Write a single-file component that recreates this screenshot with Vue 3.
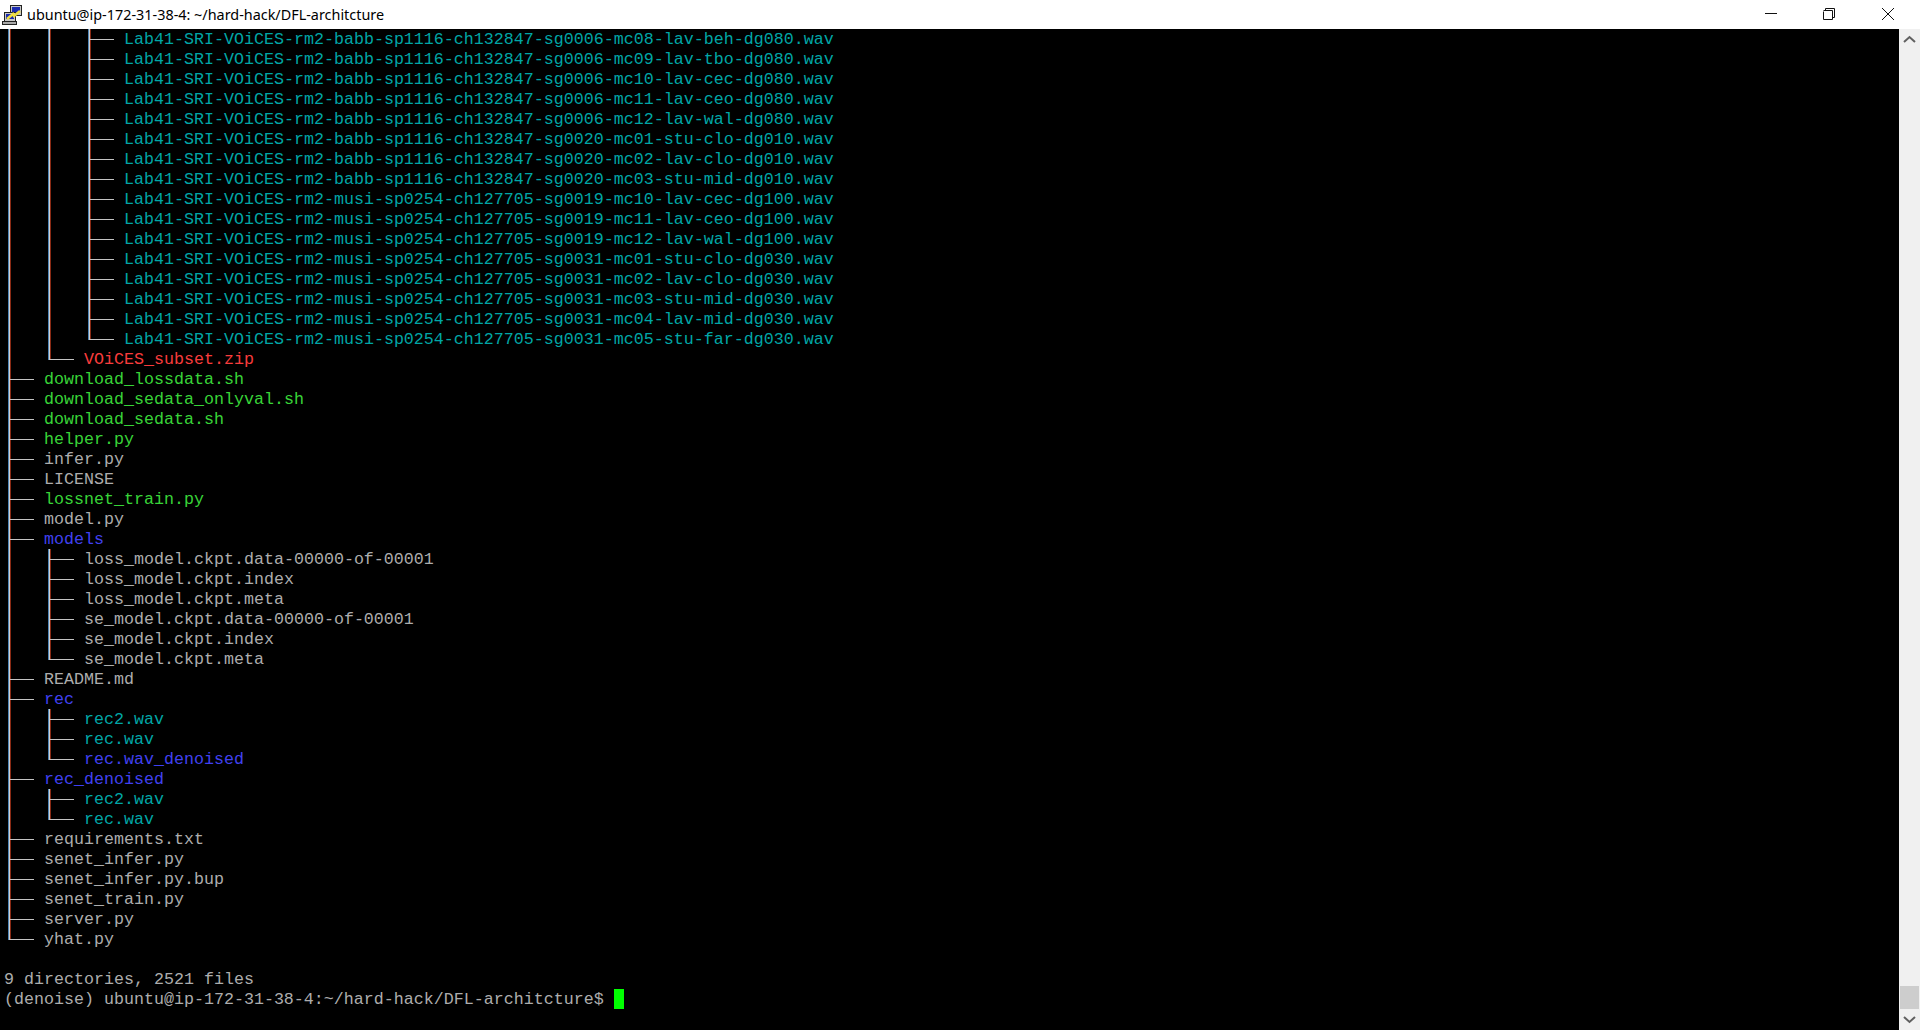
<script setup>
const wav = (s) => 'Lab41-SRI-VOiCES-rm2-' + s + '.wav'
const rows = [
  ...[
    'babb-sp1116-ch132847-sg0006-mc08-lav-beh-dg080',
    'babb-sp1116-ch132847-sg0006-mc09-lav-tbo-dg080',
    'babb-sp1116-ch132847-sg0006-mc10-lav-cec-dg080',
    'babb-sp1116-ch132847-sg0006-mc11-lav-ceo-dg080',
    'babb-sp1116-ch132847-sg0006-mc12-lav-wal-dg080',
    'babb-sp1116-ch132847-sg0020-mc01-stu-clo-dg010',
    'babb-sp1116-ch132847-sg0020-mc02-lav-clo-dg010',
    'babb-sp1116-ch132847-sg0020-mc03-stu-mid-dg010',
    'musi-sp0254-ch127705-sg0019-mc10-lav-cec-dg100',
    'musi-sp0254-ch127705-sg0019-mc11-lav-ceo-dg100',
    'musi-sp0254-ch127705-sg0019-mc12-lav-wal-dg100',
    'musi-sp0254-ch127705-sg0031-mc01-stu-clo-dg030',
    'musi-sp0254-ch127705-sg0031-mc02-lav-clo-dg030',
    'musi-sp0254-ch127705-sg0031-mc03-stu-mid-dg030',
    'musi-sp0254-ch127705-sg0031-mc04-lav-mid-dg030',
  ].map((s) => ({ tree: ['p', 'p', 't'], name: wav(s), c: 'cyan' })),
  { tree: ['p', 'p', 'e'], name: wav('musi-sp0254-ch127705-sg0031-mc05-stu-far-dg030'), c: 'cyan' },
  { tree: ['p', 'e'], name: 'VOiCES_subset.zip', c: 'red' },
  { tree: ['t'], name: 'download_lossdata.sh', c: 'green' },
  { tree: ['t'], name: 'download_sedata_onlyval.sh', c: 'green' },
  { tree: ['t'], name: 'download_sedata.sh', c: 'green' },
  { tree: ['t'], name: 'helper.py', c: 'green' },
  { tree: ['t'], name: 'infer.py', c: '' },
  { tree: ['t'], name: 'LICENSE', c: '' },
  { tree: ['t'], name: 'lossnet_train.py', c: 'green' },
  { tree: ['t'], name: 'model.py', c: '' },
  { tree: ['t'], name: 'models', c: 'blue' },
  { tree: ['p', 't'], name: 'loss_model.ckpt.data-00000-of-00001', c: '' },
  { tree: ['p', 't'], name: 'loss_model.ckpt.index', c: '' },
  { tree: ['p', 't'], name: 'loss_model.ckpt.meta', c: '' },
  { tree: ['p', 't'], name: 'se_model.ckpt.data-00000-of-00001', c: '' },
  { tree: ['p', 't'], name: 'se_model.ckpt.index', c: '' },
  { tree: ['p', 'e'], name: 'se_model.ckpt.meta', c: '' },
  { tree: ['t'], name: 'README.md', c: '' },
  { tree: ['t'], name: 'rec', c: 'blue' },
  { tree: ['p', 't'], name: 'rec2.wav', c: 'cyan' },
  { tree: ['p', 't'], name: 'rec.wav', c: 'cyan' },
  { tree: ['p', 'e'], name: 'rec.wav_denoised', c: 'blue' },
  { tree: ['t'], name: 'rec_denoised', c: 'blue' },
  { tree: ['p', 't'], name: 'rec2.wav', c: 'cyan' },
  { tree: ['p', 'e'], name: 'rec.wav', c: 'cyan' },
  { tree: ['t'], name: 'requirements.txt', c: '' },
  { tree: ['t'], name: 'senet_infer.py', c: '' },
  { tree: ['t'], name: 'senet_infer.py.bup', c: '' },
  { tree: ['t'], name: 'senet_train.py', c: '' },
  { tree: ['t'], name: 'server.py', c: '' },
  { tree: ['e'], name: 'yhat.py', c: '' },
]
</script>

<template>
  <div class="window">
    <header class="titlebar">
      <svg class="appicon" width="22" height="22" viewBox="0 0 22 22">
        <rect x="9.500" y="1.500" width="11" height="10" fill="#c8c8c8" stroke="#222" />
        <rect x="11" y="3" width="8" height="6" fill="#1c2cb0" />
        <rect x="3.500" y="8.500" width="11" height="9" fill="#c8c8c8" stroke="#222" />
        <rect x="5" y="10" width="8" height="5" fill="#1c2cb0" />
        <rect x="1.500" y="17.500" width="14" height="3" fill="#a8a8a8" stroke="#222" />
        <path d="M6 15 L12 10 L13 12 L19 7" fill="none" stroke="#f0e040" stroke-width="2.500" />
      </svg>
      <span class="title">ubuntu@ip-172-31-38-4: ~/hard-hack/DFL-architcture</span>
      <div class="controls">
        <svg width="58" height="29" viewBox="0 0 58 29"><path d="M22 13.500H34" stroke="#111" fill="none" /></svg>
        <svg width="58" height="29" viewBox="0 0 58 29"><path d="M22.500 11.500V19.500H31.500V10.500H22.500M24.500 10.500V8.500H33.500V17.500H31.500" stroke="#111" fill="none" /></svg>
        <svg width="58" height="29" viewBox="0 0 58 29"><path d="M23 8L35 20M35 8L23 20" stroke="#111" fill="none" /></svg>
      </div>
    </header>
    <div class="body">
      <main class="term">
        <div v-for="(r, i) in rows" :key="i" class="row">
          <i v-for="(t, j) in r.tree" :key="j" class="cell" :class="t" />
          <span class="text" :class="r.c">{{ r.name }}</span>
        </div>
        <div class="row"></div>
        <div class="row"><span class="text">9 directories, 2521 files</span></div>
        <div class="row"><span class="text">(denoise) ubuntu@ip-172-31-38-4:~/hard-hack/DFL-architcture$ </span><b class="cursor"></b></div>
      </main>
      <aside class="scrollbar">
        <svg class="arrow" width="17" height="17" viewBox="0 0 17 17"><path d="M3 11L8.500 6L14 11" fill="none" stroke="#606060" stroke-width="2" /></svg>
        <div class="track"><div class="thumb"></div></div>
        <svg class="arrow" width="17" height="17" viewBox="0 0 17 17"><path d="M3 6L8.500 11L14 6" fill="none" stroke="#606060" stroke-width="2" /></svg>
      </aside>
    </div>
  </div>
</template>

<style scoped>
.window { width: 1920px; height: 1030px; display: flex; flex-direction: column; background: #000; overflow: hidden; }
.titlebar { height: 29px; flex: none; background: #fff; display: flex; align-items: center; padding: 0 3px 0 1px; box-sizing: border-box; }
.appicon { flex: none; }
.title { margin-left: 4px; font: 14.4px "Noto Sans", "Open Sans", sans-serif; color: #000; white-space: pre; }
.controls { margin-left: auto; display: flex; }
.controls svg { display: block; }
.body { flex: 1; display: flex; min-height: 0; }
.term { flex: 1; padding-left: 4px; font: 16.67px/20px "Liberation Mono", monospace; color: #adadad; white-space: pre; overflow: hidden; }
.row { height: 20px; display: flex; align-items: flex-start; }
.text { line-height: 22px; }
.cell { display: block; width: 40px; height: 20px; flex: none; position: relative; }
.cell::before { content: ""; position: absolute; left: 5px; top: 0; bottom: 0; width: 1px; background: #d0d0d0; box-shadow: -1px 0 0 #4f86b8, 1px 0 0 #8a2a14; }
.cell.t::after, .cell.e::after { content: ""; position: absolute; left: 6px; top: 10px; width: 24px; height: 1px; background: #c4c4c4; }
.cell.e::before { bottom: 9px; }
.cyan { color: #00a6a6; }
.green { color: #38d438; }
.red { color: #f83c3c; }
.blue { color: #4040f0; }
.cursor { display: block; width: 10px; height: 20px; background: #00ff00; }
.scrollbar { width: 21px; flex: none; background: #f0f0f0; display: flex; flex-direction: column; align-items: center; }
.arrow { flex: none; margin: 2px 0; }
.track { flex: 1; width: 100%; display: flex; flex-direction: column; justify-content: flex-end; }
.thumb { height: 23px; margin: 0 1px; background: #cdcdcd; }
</style>

<style>
html, body { margin: 0; background: #000; }
</style>
